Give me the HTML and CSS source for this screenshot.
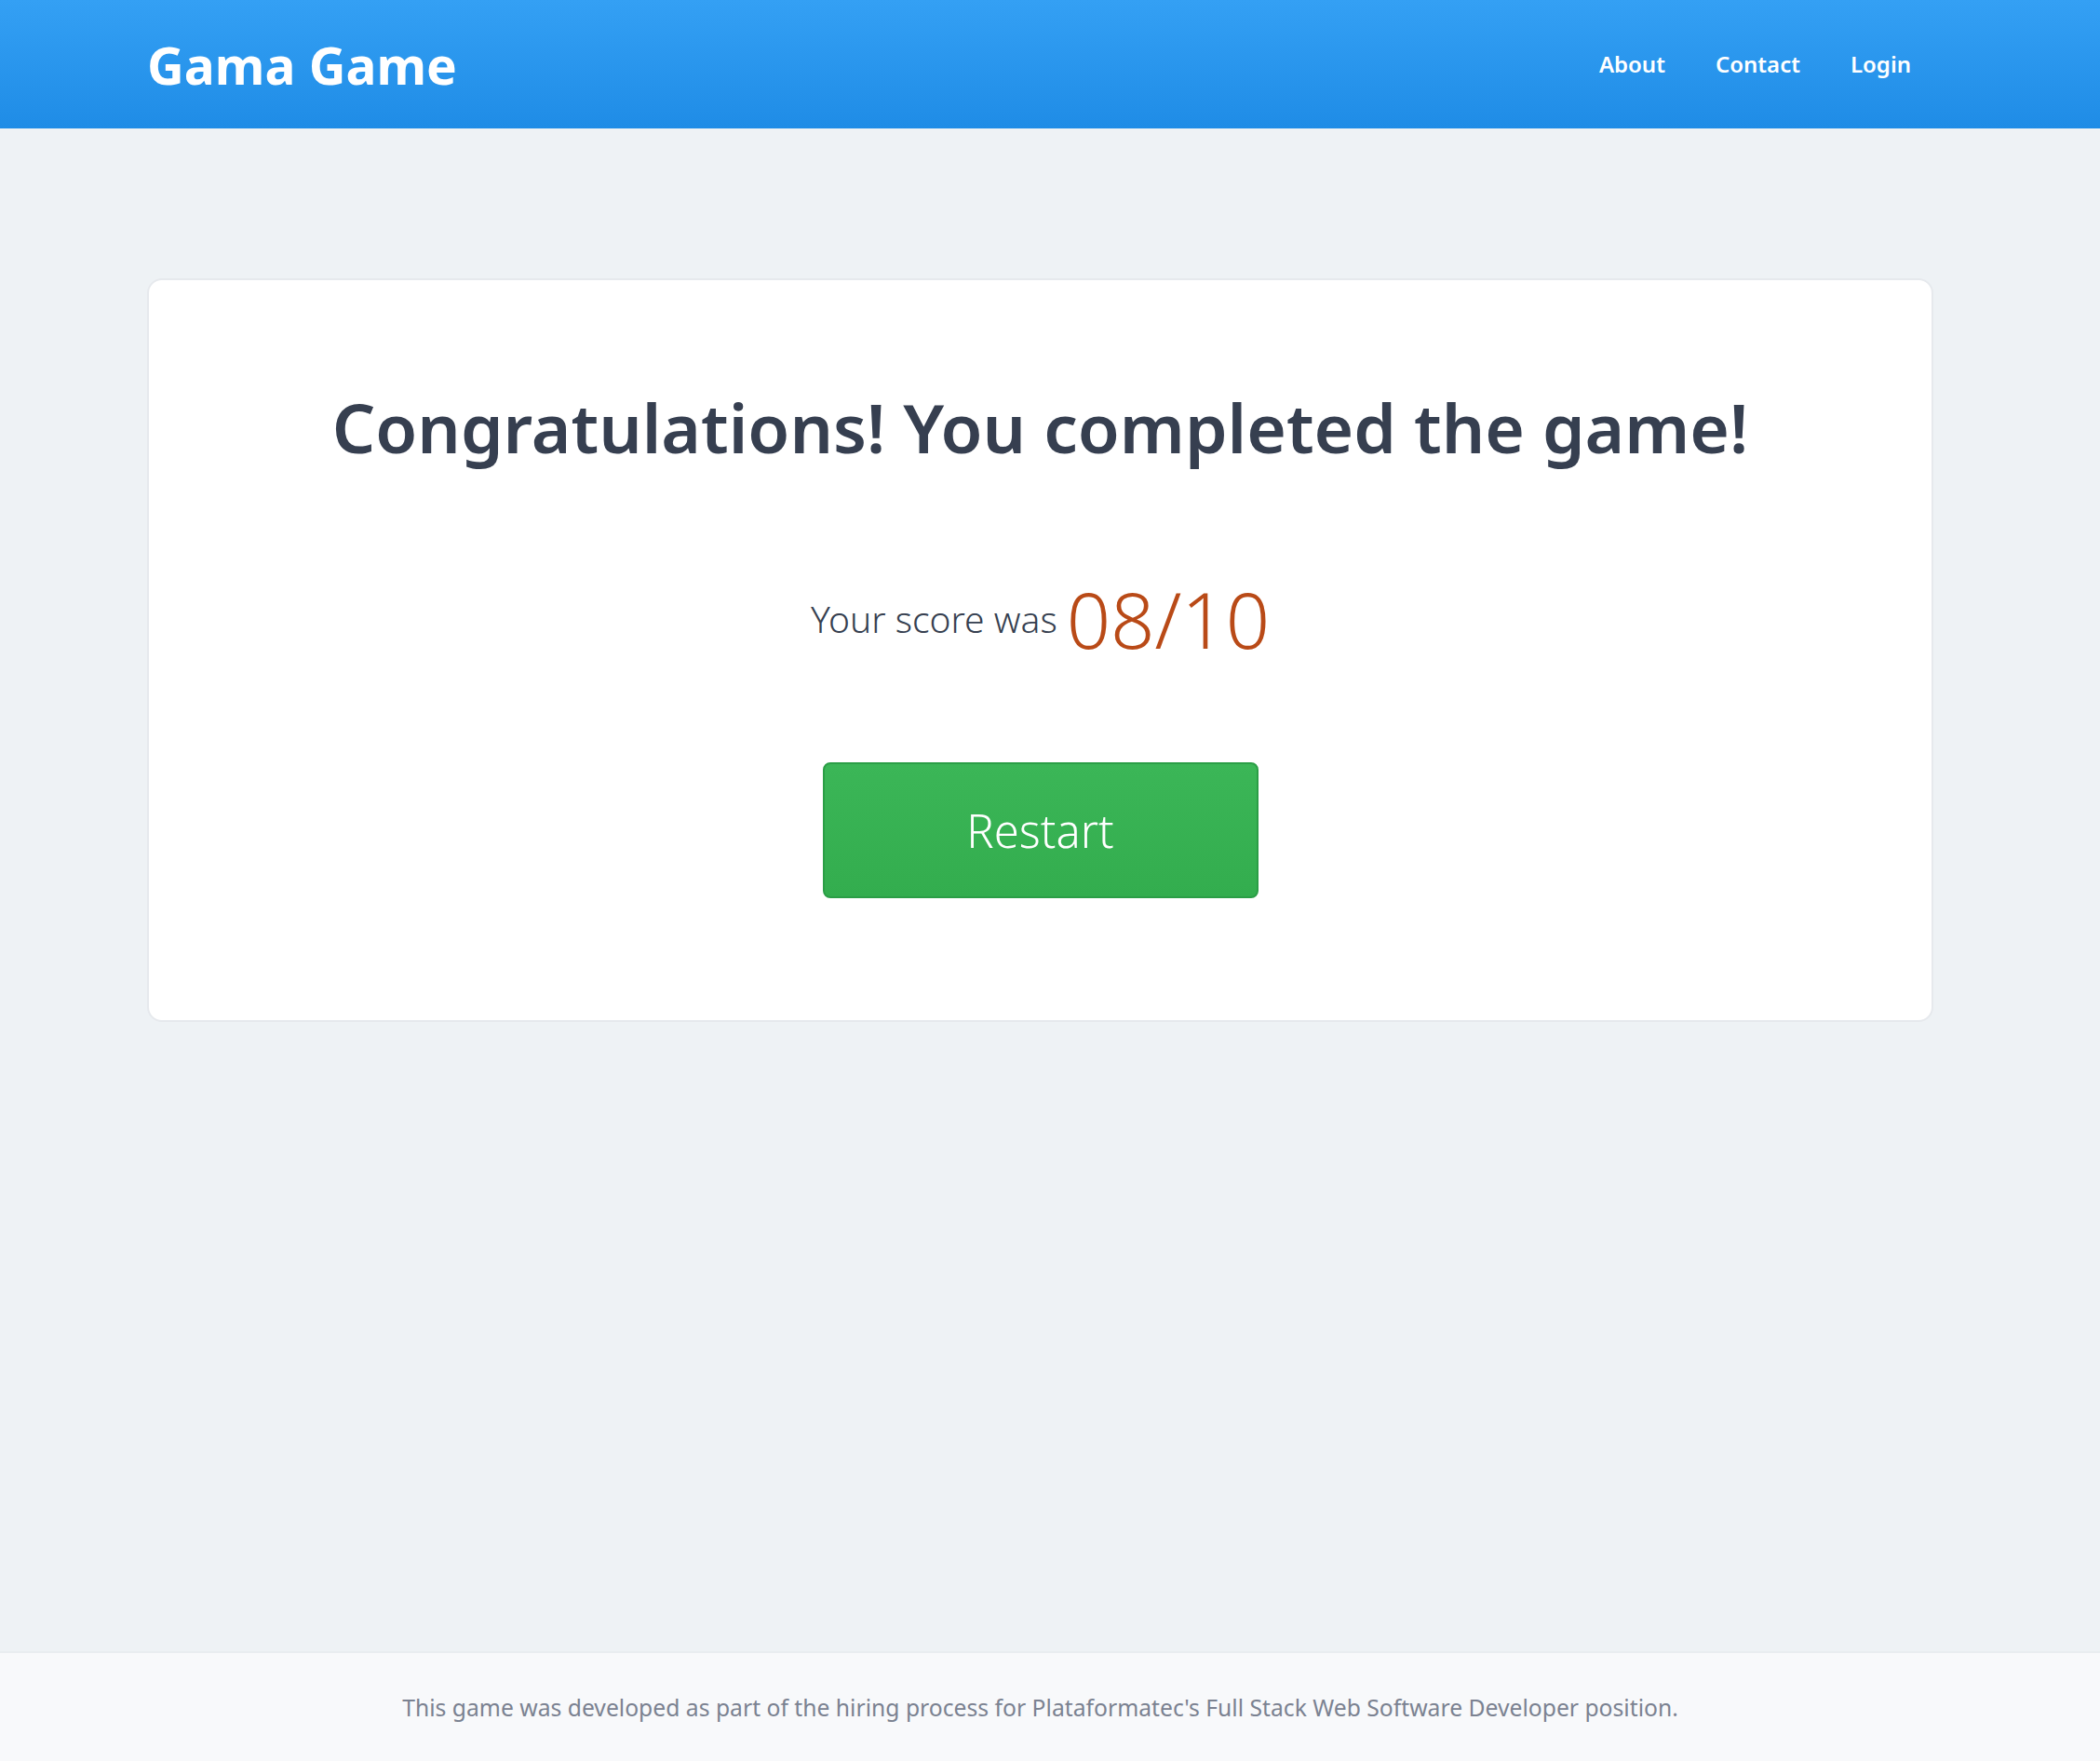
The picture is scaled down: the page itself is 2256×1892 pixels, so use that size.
FILE: index.html
```html
<!DOCTYPE html>
<html lang="en">
<head>
<meta charset="utf-8">
<title>Gama Game</title>
<link rel="stylesheet" href="styles.css">
</head>
<body>
  <header class="navbar">
    <div class="container nav-inner">
      <a class="brand" href="#">Gama Game</a>
      <nav class="nav-links">
        <a class="nav-item" href="#">About</a>
        <a class="nav-item" href="#">Contact</a>
        <a class="nav-item" href="#">Login</a>
      </nav>
    </div>
  </header>

  <main class="main">
    <div class="container">
      <section class="card">
        <h1 class="title">Congratulations! You completed the game!</h1>
        <p class="score">
          <span class="score-label">Your score was</span>
          <span class="score-value">08/10</span>
        </p>
        <div class="actions">
          <a class="button" href="#">Restart</a>
        </div>
      </section>
    </div>
  </main>

  <footer class="footer">
    <div class="container">
      <p class="footer-text">This game was developed as part of the hiring process for Plataformatec's Full Stack Web Software Developer position.</p>
    </div>
  </footer>
</body>
</html>
```

FILE: styles.css
```css
html, body {
  margin: 0;
  padding: 0;
}

body {
  min-height: 100vh;
  display: flex;
  flex-direction: column;
  background: #eef2f5;
  font-family: "Noto Sans", "Open Sans", sans-serif;
  color: #363f50;
}

a {
  text-decoration: none;
}

.container {
  width: 1919px;
  margin: 0 179px 0 158px;
}

/* Header */
.navbar {
  height: 138px;
  background: linear-gradient(180deg, #34a0f4 0%, #1f8ce6 100%);
}

.nav-inner {
  height: 100%;
  display: flex;
  align-items: center;
  justify-content: space-between;
}

.brand {
  color: #ffffff;
  font-size: 55px;
  font-weight: 700;
  line-height: 1;
}

.nav-links {
  display: flex;
  align-items: center;
  gap: 54px;
  margin-right: 24px;
}

.nav-item {
  color: #ffffff;
  font-size: 24px;
  font-weight: 600;
  line-height: 1;
}

/* Main */
.main {
  flex: 1;
  padding-top: 161px;
}

.card {
  background: #ffffff;
  border: 2px solid #e6e9ed;
  border-radius: 16px;
  padding: 117px 40px 131px;
  text-align: center;
}

.title {
  margin: 0;
  font-size: 73px;
  line-height: 82px;
  font-weight: 600;
  color: #363f50;
}

.score {
  margin: 120px 0 0;
  display: flex;
  justify-content: center;
  align-items: center;
  gap: 10px;
}

.score-label {
  font-size: 39px;
  line-height: 1;
  font-weight: 300;
  color: #363f50;
}

.score-value {
  font-size: 83px;
  line-height: 89px;
  font-weight: 300;
  color: #b94a17;
}

.actions {
  margin-top: 110px;
  display: flex;
  justify-content: center;
}

.button {
  box-sizing: border-box;
  width: 468px;
  height: 146px;
  display: inline-flex;
  align-items: center;
  justify-content: center;
  font-size: 49px;
  font-weight: 300;
  color: #ffffff;
  background: linear-gradient(180deg, #3bb657 0%, #33ad4e 100%);
  border: 2px solid #2b9e46;
  border-radius: 8px;
}

/* Footer */
.footer {
  box-sizing: border-box;
  height: 118px;
  background: #f8f9fb;
  border-top: 2px solid #e9edf0;
  display: flex;
  align-items: center;
}

.footer-text {
  margin: 0;
  text-align: center;
  font-size: 24.7px;
  color: #7b8291;
}
```
